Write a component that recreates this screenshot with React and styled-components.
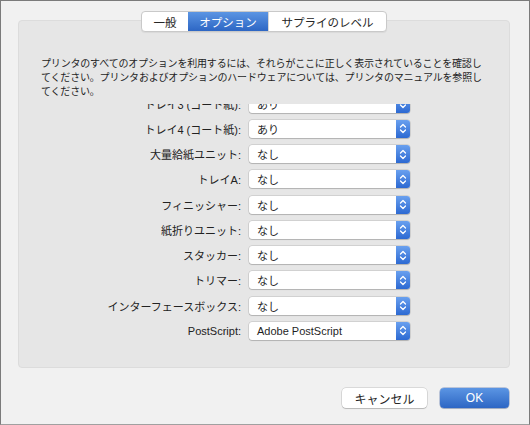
import React, { useEffect, useRef } from "react";
import styled, { createGlobalStyle } from "styled-components";

const GlobalStyle = createGlobalStyle`
	html, body {
		margin: 0;
		padding: 0;
		background: #f1f1f1;
	}
	body {
		font-family: "Liberation Sans", "Noto Sans CJK JP", sans-serif;
		color: #262626;
	}
`;

const Window = styled.div`
	box-sizing: border-box;
	width: 530px;
	height: 425px;
	background: #f1f1f1;
	border: 1px solid #7b7b7b;
	border-bottom-color: #a0a0a0;
	display: flex;
	flex-direction: column;
	padding: 10px 19px 0 17px;
`;

const Panel = styled.div`
	position: relative;
	height: 346px;
	margin-top: 9px;
	background: #e6e6e6;
	border: 1px solid #dcdcdc;
	border-radius: 4px;
	display: flex;
	flex-direction: column;
`;

const TabsWrap = styled.div`
	position: absolute;
	top: -10px;
	left: 0;
	right: 0;
	display: flex;
	justify-content: center;
`;

const Tabs = styled.div`
	display: flex;
	height: 19px;
	background: #fff;
	border: 1px solid #c9c9c9;
	border-radius: 4px;
	overflow: hidden;
	box-shadow: 0 1px 1px rgba(0, 0, 0, 0.06);
`;

const Tab = styled.div`
	width: ${(p) => p.$w}px;
	display: flex;
	align-items: center;
	justify-content: center;
	font-size: 11.5px;
	color: ${(p) => (p.$active ? "#fff" : "#262626")};
	background: ${(p) =>
		p.$active ? "linear-gradient(#5b95e3, #2d66c4)" : "transparent"};
	border-left: ${(p) => (p.$first || p.$active ? "none" : "1px solid #d6d6d6")};
`;

const Intro = styled.p`
	margin: 35px 0 0 22px;
	width: 446px;
	font-family: "Noto Sans CJK JP", sans-serif;
	font-size: 10px;
	letter-spacing: -0.18px;
	line-height: 14px;
	color: #1e1e1e;
`;

const Scroller = styled.div`
	box-sizing: border-box;
	margin-top: 6px;
	height: 251px;
	padding-bottom: 20px;
	overflow: hidden;
`;

const Row = styled.div`
	height: 25.25px;
	display: flex;
	align-items: center;
	gap: 8px;
`;

const Label = styled.div`
	width: 222px;
	text-align: right;
	font-family: "Liberation Sans", "Noto Sans CJK JP", sans-serif;
	font-size: 11px;
	color: #222;
	white-space: nowrap;
`;

const Select = styled.div`
	box-sizing: border-box;
	width: 161px;
	height: 18px;
	display: flex;
	background: #fff;
	border-radius: 3px;
	box-shadow: 0 0 0 0.5px rgba(0, 0, 0, 0.18), 0 1px 1px rgba(0, 0, 0, 0.15);
	overflow: hidden;
`;

const SelectValue = styled.div`
	flex: 1;
	display: flex;
	align-items: center;
	padding-left: 8px;
	font-size: 11px;
	color: #1f1f1f;
`;

const Stepper = styled.div`
	width: 14px;
	display: flex;
	align-items: center;
	justify-content: center;
	background: linear-gradient(#69a0ef, #2c69d2);
`;

const Footer = styled.div`
	display: flex;
	justify-content: flex-end;
	gap: 13px;
	margin-top: 20px;
	margin-right: 1px;
`;

const Button = styled.div`
	box-sizing: border-box;
	width: ${(p) => p.$w}px;
	height: 20px;
	display: flex;
	align-items: center;
	justify-content: center;
	border-radius: 4px;
	font-size: 12px;
	color: ${(p) => (p.$primary ? "#fff" : "#262626")};
	background: ${(p) => (p.$primary ? "linear-gradient(#5b95e3, #2d66c4)" : "#fff")};
	box-shadow: ${(p) =>
		p.$primary
			? "0 0 0 0.5px rgba(30, 70, 150, 0.5), 0 1px 1px rgba(0,0,0,0.15)"
			: "0 0 0 0.5px rgba(0, 0, 0, 0.2), 0 1px 1px rgba(0,0,0,0.15)"};
`;

const Chevrons = () => (
	<svg width="8" height="11" viewBox="0 0 8 11">
		<path d="M1.5 4 L4 1.5 L6.5 4" fill="none" stroke="#fff" strokeWidth="1.3" strokeLinecap="round" strokeLinejoin="round" />
		<path d="M1.5 7 L4 9.5 L6.5 7" fill="none" stroke="#fff" strokeWidth="1.3" strokeLinecap="round" strokeLinejoin="round" />
	</svg>
);

const options = [
	["トレイ3 (コート紙):", "あり"],
	["トレイ4 (コート紙):", "あり"],
	["大量給紙ユニット:", "なし"],
	["トレイA:", "なし"],
	["フィニッシャー:", "なし"],
	["紙折りユニット:", "なし"],
	["スタッカー:", "なし"],
	["トリマー:", "なし"],
	["インターフェースボックス:", "なし"],
	["PostScript:", "Adobe PostScript"],
];

const App = () => {
	const scrollRef = useRef(null);

	useEffect(() => {
		// list is scrolled a little, first row is cut by the text above
		if (scrollRef.current) scrollRef.current.scrollTop = 13;
	}, []);

	return (
		<Window>
			<GlobalStyle />
			<Panel>
				<TabsWrap>
					<Tabs>
						<Tab $w={46} $first>一般</Tab>
						<Tab $w={80} $active>オプション</Tab>
						<Tab $w={117}>サプライのレベル</Tab>
					</Tabs>
				</TabsWrap>
				<Intro>
					プリンタのすべてのオプションを利用するには、それらがここに正しく表示されていることを確認してください。プリンタおよびオプションのハードウェアについては、プリンタのマニュアルを参照してください。
				</Intro>
				<Scroller ref={scrollRef}>
					{options.map(([label, value], i) => (
						<Row key={i}>
							<Label>{label}</Label>
							<Select>
								<SelectValue>{value}</SelectValue>
								<Stepper>
									<Chevrons />
								</Stepper>
							</Select>
						</Row>
					))}
				</Scroller>
			</Panel>
			<Footer>
				<Button $w={85}>キャンセル</Button>
				<Button $w={69} $primary>OK</Button>
			</Footer>
		</Window>
	);
};

export default App;
